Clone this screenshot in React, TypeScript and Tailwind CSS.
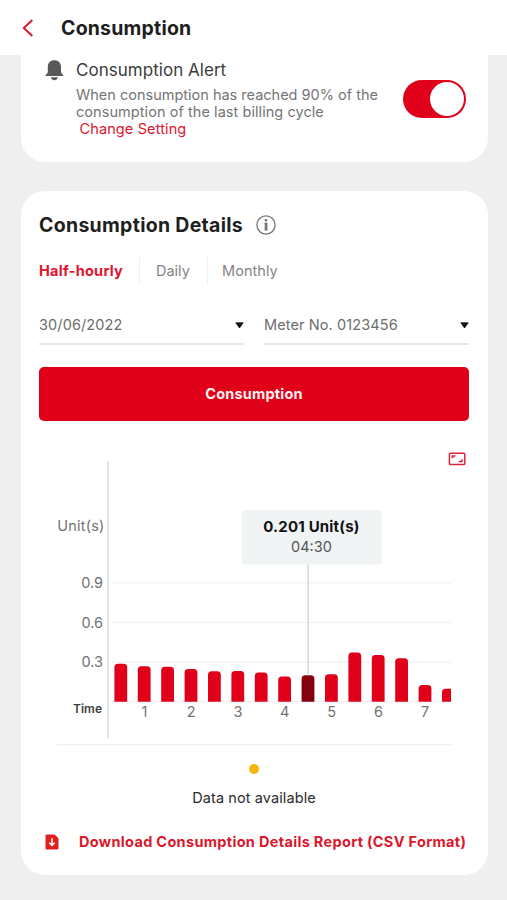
import { FC, useState } from "react";

interface Reading {
    time: string;
    value: number;
}

const READINGS: Reading[] = [
    { time: "00:30", value: 0.288 },
    { time: "01:00", value: 0.268 },
    { time: "01:30", value: 0.265 },
    { time: "02:00", value: 0.248 },
    { time: "02:30", value: 0.23 },
    { time: "03:00", value: 0.232 },
    { time: "03:30", value: 0.221 },
    { time: "04:00", value: 0.19 },
    { time: "04:30", value: 0.201 },
    { time: "05:00", value: 0.208 },
    { time: "05:30", value: 0.373 },
    { time: "06:00", value: 0.354 },
    { time: "06:30", value: 0.329 },
    { time: "07:00", value: 0.126 },
    { time: "07:30", value: 0.098 },
];

const BASE_Y = 261.7;
const UNIT_HEIGHT = 132;
const BAR_WIDTH = 12.8;
const BAR_STEP = 23.4;

const barPath = (x: number, height: number) => {
    const top = BASE_Y - height;
    return `M${x} ${BASE_Y}V${top + 3.5}q0 -3.5 3.5 -3.5h${BAR_WIDTH - 7}q3.5 0 3.5 3.5V${BASE_Y}z`;
};

const BellIcon: FC = () => (
    <svg className="block h-[21px] w-[19px]" viewBox="0 0 19 21" fill="#58595b">
        <path d="M9.3 0.3C5.4 0.3 2.8 3 2.8 6.8V11.8C2.8 13 2.2 13.9 0.6 14.8V15.9H18.2V14.8C16.6 13.9 16 13 16 11.8V6.8C16 3 13.3 0.3 9.3 0.3Z" />
        <path d="M5.8 17.3H13C12.3 19.2 11.1 20.3 9.4 20.3S6.5 19.2 5.8 17.3Z" />
    </svg>
);

const InfoIcon: FC = () => (
    <svg className="block size-5" viewBox="0 0 20 20">
        <circle cx="10" cy="10" r="9.1" fill="none" stroke="#757575" strokeWidth="1.3" />
        <circle cx="10" cy="5.2" r="1.3" fill="#757575" />
        <path d="M8.4 7.8H11.4V14.6H11.8V15.6H8.4V14.6H8.7V8.7H8.4z" fill="#757575" />
    </svg>
);

const FullscreenIcon: FC = () => (
    <svg className="block h-[14px] w-[18px]" viewBox="0 0 18 14">
        <rect x="1.4" y="1.2" width="15.4" height="11.4" rx="1.2" fill="none" stroke="#dc2440" strokeWidth="1.5" />
        <path d="M3.8 6.2V3.6H7.6L6.8 4.7H5.1V5.4z" fill="#dc2440" stroke="#dc2440" strokeWidth="0.5" />
        <path d="M14.4 7.2V10H10.6L11.5 8.9H13.1V8.2z" fill="#dc2440" stroke="#dc2440" strokeWidth="0.5" />
    </svg>
);

const DownloadIcon: FC = () => (
    <svg className="block h-4 w-[14px]" viewBox="0 0 14 16">
        <path d="M1.5 0.5H9.5L13.5 4.2V14Q13.5 15.5 12 15.5H1.5Q0.5 15.5 0.5 14.5V1.5Q0.5 0.5 1.5 0.5z" fill="#e0201f" />
        <path d="M7 4.3V11.3M4.3 8.7L7 11.4L9.7 8.7" fill="none" stroke="#fff" strokeWidth="1.5" />
    </svg>
);

interface SelectFieldProps {
    label: string;
}

const SelectField: FC<SelectFieldProps> = ({ label }) => (
    <button className="flex h-[37px] items-center justify-between border-b-2 border-[#e6e6e6] pb-[1px] text-left text-[14.5px] tracking-[0.1px] text-[#6d6d6d]">
        {label}
        <svg className="block h-[7px] w-[9px]" viewBox="0 0 9 7">
            <path d="M0.8 0.8H8.2L4.5 6z" fill="#111" stroke="#111" strokeWidth="0.8" strokeLinejoin="round" />
        </svg>
    </button>
);

const UsageChart: FC = () => {
    const [active, setActive] = useState(8);
    const reading = READINGS[active];
    const activeX = 75.6 + active * BAR_STEP + BAR_WIDTH / 2;

    return (
        <svg className="block h-[310px] w-[430px] font-[Inter,sans-serif]" viewBox="0 0 430 310">
            <defs>
                <clipPath id="plot">
                    <rect x="70" y="0" width="342" height="300" />
                </clipPath>
            </defs>

            {[0, 0.3, 0.6, 0.9].map((tick) => (
                <line key={tick} x1="73" x2="412" y1={BASE_Y - tick * UNIT_HEIGHT} y2={BASE_Y - tick * UNIT_HEIGHT} stroke="#eff1f1" strokeWidth="1.2" />
            ))}
            <line x1="18" x2="412" y1="304.7" y2="304.7" stroke="#efefef" strokeWidth="1.2" />
            <line x1="69" x2="69" y1="21" y2="298" stroke="#e4e4e4" strokeWidth="2" />

            <g fill="#737373" fontSize="14.5" textAnchor="end">
                <text x="65.5" y="90.5" letterSpacing="0.2">Unit(s)</text>
                <text x="64" y="148">0.9</text>
                <text x="64" y="187.5">0.6</text>
                <text x="64" y="227">0.3</text>
            </g>
            <text x="63" y="273" fill="#3f3f3f" fontSize="12" fontWeight="600" textAnchor="end">Time</text>

            <g clipPath="url(#plot)">
                {READINGS.map((item, i) => (
                    <path
                        key={item.time}
                        d={barPath(75.4 + i * BAR_STEP, item.value * UNIT_HEIGHT)}
                        fill={i === active ? "#85000f" : "#e00019"}
                        onClick={() => setActive(i)}
                    />
                ))}
            </g>

            <g fill="#737373" fontSize="14.5" textAnchor="middle">
                {[1, 2, 3, 4, 5, 6, 7].map((hour) => (
                    <text key={hour} x={58.6 + hour * 46.8} y="276.5">{hour}</text>
                ))}
            </g>

            <line x1={activeX} x2={activeX} y1="124" y2={BASE_Y - reading.value * UNIT_HEIGHT} stroke="#cfcfcf" strokeWidth="1.2" />
            <rect x={activeX - 66.6} y="70" width="140" height="54.6" rx="3" fill="#f1f4f5" />
            <text x={activeX + 3.2} y="92" fill="#111" fontSize="15" fontWeight="700" letterSpacing="0.2" textAnchor="middle">
                {reading.value.toFixed(3)} Unit(s)
            </text>
            <text x={activeX + 3.2} y="111.5" fill="#555" fontSize="14.5" textAnchor="middle">{reading.time}</text>
        </svg>
    );
};

export default function App() {
    const [alertOn, setAlertOn] = useState(true);

    return (
        <div className="h-[900px] w-[507px] overflow-hidden bg-[#efefef] font-[Inter,sans-serif]">
            <header className="flex h-[54.5px] items-center bg-white pl-[22px] pt-[1px]">
                <svg className="block h-[18px] w-3" viewBox="0 0 12 18">
                    <path d="M10.3 1L1.8 9L10.3 17" fill="none" stroke="#dc1a30" strokeWidth="2" />
                </svg>
                <h1 className="ml-[27px] text-[19.5px] font-bold leading-7 tracking-[0.2px] text-[#1f1f1f]">
                    Consumption
                </h1>
            </header>

            <section className="ml-[20.5px] flex h-[107.5px] w-[467px] rounded-b-[24px] bg-white pl-6">
                <div className="w-[31.5px] pt-[5.5px]">
                    <BellIcon />
                </div>
                <div className="w-[326.5px] pt-[3.5px]">
                    <h2 className="text-[17px] leading-6 tracking-[0.03px] text-[#3c3c3c]">Consumption Alert</h2>
                    <p className="mt-[3.5px] whitespace-nowrap text-[14.5px] leading-[17.3px] text-[#757575]">
                        When consumption has reached 90% of the
                        <br />
                        <span className="tracking-[0.06px]">consumption of the last billing cycle</span>
                        <br />
                        <a className="ml-[3.5px] tracking-[0.12px] text-[#e0142e]">Change Setting</a>
                    </p>
                </div>
                <button
                    role="switch"
                    aria-checked={alertOn}
                    onClick={() => setAlertOn(!alertOn)}
                    className="mt-[25.5px] flex h-[38px] w-[63px] items-center justify-end rounded-full bg-[#e00019] pr-[2px]"
                >
                    <span className="size-[33.5px] rounded-full bg-white" />
                </button>
            </section>

            <section className="ml-[20.5px] mt-[29px] h-[684px] w-[467px] rounded-[24px] bg-white px-[18.5px] pt-5">
                <div className="flex h-7 items-center gap-[13px]">
                    <h2 className="w-[204px] whitespace-nowrap pt-px text-[19.5px] font-bold tracking-[0.29px] text-[#1f1f1f]">Consumption Details</h2>
                    <InfoIcon />
                </div>

                <nav className="mt-[17.5px] flex h-7 items-center text-[14.5px] text-[#858585]">
                    <a className="w-[100px] font-bold tracking-[0.25px] text-[#e0142e]">Half-hourly</a>
                    <a className="flex h-7 w-[68px] items-center border-l border-[#efefef] pl-4">Daily</a>
                    <a className="flex h-7 items-center border-l border-[#efefef] pl-[14px] tracking-[0.05px]">Monthly</a>
                </nav>

                <div className="mt-[23.5px] grid grid-cols-2 gap-5">
                    <SelectField label="30/06/2022" />
                    <SelectField label="Meter No. 0123456" />
                </div>

                <button className="mt-[22px] h-[53.5px] w-full rounded-[5px] bg-[#e00019] text-[14.5px] font-bold tracking-[0.2px] text-[#fff0f1]">
                    Consumption
                </button>

                <div className="mt-[31px] flex justify-end pr-[3px]">
                    <FullscreenIcon />
                </div>
                <div className="-mt-[25.5px]">
                    <UsageChart />
                </div>

                <div className="flex flex-col items-center pt-[14px]">
                    <span className="size-[10px] rounded-full bg-[#f5b50a]" />
                    <span className="mt-[14px] text-[14.5px] leading-5 tracking-[0.1px] text-[#2b2b2b]">Data not available</span>
                </div>

                <a className="mt-6 flex h-5 items-center pl-[6px] text-[14.5px] font-bold tracking-[0.32px] text-[#d9182c]">
                    <DownloadIcon />
                    <span className="ml-5 whitespace-nowrap">Download Consumption Details Report (CSV Format)</span>
                </a>
            </section>
        </div>
    );
}
